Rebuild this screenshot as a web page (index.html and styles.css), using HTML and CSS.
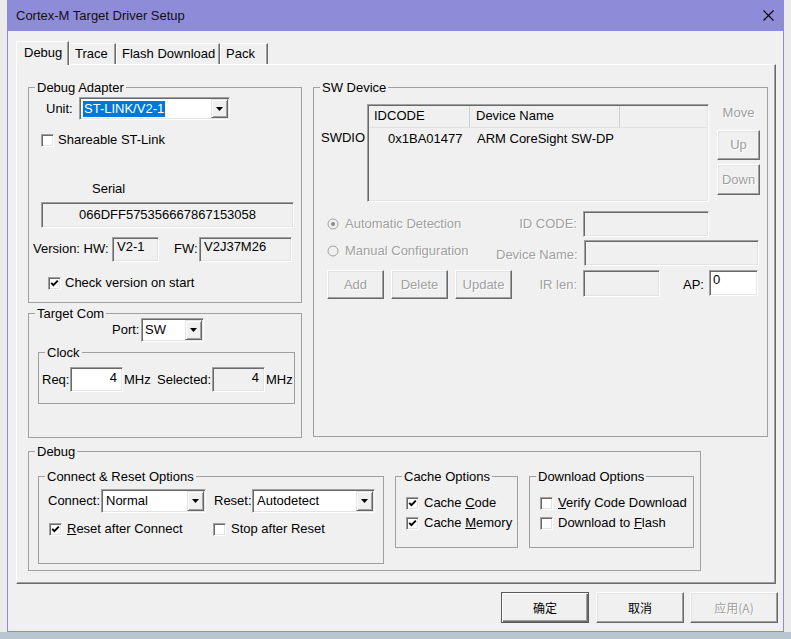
FILE: index.html
```html
<!DOCTYPE html>
<html>
<head>
<meta charset="utf-8">
<title>Cortex-M Target Driver Setup</title>
<link rel="stylesheet" href="styles.css">
</head>
<body>
<div class="window">
  <div class="titlebar">
    <span class="title">Cortex-M Target Driver Setup</span>
    <svg class="close" width="11" height="11" viewBox="0 0 11 11"><path d="M0.5 0.5L10.5 10.5M10.5 0.5L0.5 10.5" stroke="#000" stroke-width="1.1" fill="none"/></svg>
  </div>
  <div class="tabs">
    <div class="tab tab-active tab-debug">Debug</div>
    <div class="tab tab-trace">Trace</div>
    <div class="tab tab-flash">Flash Download</div>
    <div class="tab tab-pack">Pack</div>
  </div>
  <div class="pane">
    <div class="top-row">
      <div class="left-col">
        <fieldset class="grp adapter">
          <legend>Debug Adapter</legend>
          <div class="unit-row">
            <span class="unit-label">Unit:</span>
            <div class="combo combo-unit">
              <span class="combo-text"><span class="sel">ST-LINK/V2-1</span></span>
              <span class="combo-btn"><svg width="7" height="4" viewBox="0 0 7 4"><path d="M0 0H7L3.5 4Z" fill="#000"/></svg></span>
            </div>
          </div>
          <div class="check-row share-row"><span class="chk"></span><span>Shareable ST-Link</span></div>
          <div class="serial-label">Serial</div>
          <div class="field serial-field">066DFF575356667867153058</div>
          <div class="version-row">
            <span class="ver-label">Version: HW:</span>
            <div class="field hw-field">V2-1</div>
            <span class="fw-label">FW:</span>
            <div class="field fw-field">V2J37M26</div>
          </div>
          <div class="check-row checkver-row"><span class="chk"><svg width="9" height="9" viewBox="0 0 9 9"><path d="M1.2 3.8L3.4 6.2L7.8 1.6" stroke="#000" stroke-width="1.9" fill="none"/></svg></span><span>Check version on start</span></div>
        </fieldset>
        <fieldset class="grp target">
          <legend>Target Com</legend>
          <div class="port-row">
            <span class="port-label">Port:</span>
            <div class="combo combo-port">
              <span class="combo-text">SW</span>
              <span class="combo-btn"><svg width="7" height="4" viewBox="0 0 7 4"><path d="M0 0H7L3.5 4Z" fill="#000"/></svg></span>
            </div>
          </div>
          <fieldset class="grp clock">
            <legend>Clock</legend>
            <div class="clock-row">
              <span class="req-label">Req:</span>
              <div class="field field-white mhz-field">4</div>
              <span class="mhz">MHz</span>
              <span class="sel-label">Selected:</span>
              <div class="field mhz-field">4</div>
              <span class="mhz">MHz</span>
            </div>
          </fieldset>
        </fieldset>
      </div>
      <fieldset class="grp swdev">
        <legend>SW Device</legend>
        <div class="sw-top">
          <div class="swdio">SWDIO</div>
          <div class="listview">
            <div class="lv-head">
              <div class="lv-col lv-c1">IDCODE</div>
              <div class="lv-col lv-c2">Device Name</div>
              <div class="lv-col lv-c3"></div>
            </div>
            <div class="lv-row">
              <div class="lv-c1 lv-cell-id">0x1BA01477</div>
              <div class="lv-c2 lv-cell-name">ARM CoreSight SW-DP</div>
            </div>
          </div>
          <div class="move-col">
            <div class="move-label">Move</div>
            <div class="btn btn-disabled btn-up">Up</div>
            <div class="btn btn-disabled btn-down">Down</div>
          </div>
        </div>
        <div class="cfg-row cfg-a">
          <div class="cfg-left"><span class="radio"><svg width="12" height="12" viewBox="0 0 12 12"><circle cx="6" cy="6" r="5" fill="#f0f0f0" stroke="#a0a0a0"/><circle cx="6" cy="6" r="2" fill="#8a8a8a"/></svg></span><span class="dis">Automatic Detection</span></div>
          <span class="cfg-label dis">ID CODE:</span>
          <div class="field idcode-field"></div>
        </div>
        <div class="cfg-row cfg-b">
          <div class="cfg-left radio-manual"><span class="radio"><svg width="12" height="12" viewBox="0 0 12 12"><circle cx="6" cy="6" r="5" fill="#f0f0f0" stroke="#a0a0a0"/></svg></span><span class="dis">Manual Configuration</span></div>
          <span class="cfg-label dis devname-label">Device Name:</span>
          <div class="field devname-field"></div>
        </div>
        <div class="cfg-row cfg-c">
          <div class="cfg-left cfg-btns">
            <div class="btn btn-disabled btn-sm">Add</div>
            <div class="btn btn-disabled btn-sm">Delete</div>
            <div class="btn btn-disabled btn-sm">Update</div>
          </div>
          <span class="cfg-label dis">IR len:</span>
          <div class="field irlen-field"></div>
          <span class="ap-label">AP:</span>
          <div class="field field-white ap-field">0</div>
        </div>
      </fieldset>
    </div>
    <fieldset class="grp debug">
      <legend>Debug</legend>
      <div class="debug-row">
        <fieldset class="grp connect">
          <legend>Connect &amp; Reset Options</legend>
          <div class="connect-row">
            <span class="connect-label">Connect:</span>
            <div class="combo combo-connect">
              <span class="combo-text">Normal</span>
              <span class="combo-btn"><svg width="7" height="4" viewBox="0 0 7 4"><path d="M0 0H7L3.5 4Z" fill="#000"/></svg></span>
            </div>
            <span class="reset-label">Reset:</span>
            <div class="combo combo-reset">
              <span class="combo-text">Autodetect</span>
              <span class="combo-btn"><svg width="7" height="4" viewBox="0 0 7 4"><path d="M0 0H7L3.5 4Z" fill="#000"/></svg></span>
            </div>
          </div>
          <div class="check-row connect-checks">
            <div class="check-item first-check"><span class="chk"><svg width="9" height="9" viewBox="0 0 9 9"><path d="M1.2 3.8L3.4 6.2L7.8 1.6" stroke="#000" stroke-width="1.9" fill="none"/></svg></span><span><u>R</u>eset after Connect</span></div>
            <div class="check-item"><span class="chk"></span><span>Stop after Reset</span></div>
          </div>
        </fieldset>
        <fieldset class="grp cache">
          <legend>Cache Options</legend>
          <div class="check-row opt-row opt-first"><span class="chk"><svg width="9" height="9" viewBox="0 0 9 9"><path d="M1.2 3.8L3.4 6.2L7.8 1.6" stroke="#000" stroke-width="1.9" fill="none"/></svg></span><span>Cache <u>C</u>ode</span></div>
          <div class="check-row opt-row opt-second"><span class="chk"><svg width="9" height="9" viewBox="0 0 9 9"><path d="M1.2 3.8L3.4 6.2L7.8 1.6" stroke="#000" stroke-width="1.9" fill="none"/></svg></span><span>Cache <u>M</u>emory</span></div>
        </fieldset>
        <fieldset class="grp download">
          <legend>Download Options</legend>
          <div class="check-row opt-row opt-first clip"><span class="chk"></span><span><u>V</u>erify Code Download</span></div>
          <div class="check-row opt-row opt-second clip"><span class="chk"></span><span>Download to <u>F</u>lash</span></div>
        </fieldset>
      </div>
    </fieldset>
  </div>
  <div class="buttons">
    <div class="btn btn-default btn-dlg">确定</div>
    <div class="btn btn-dlg">取消</div>
    <div class="btn btn-dlg btn-disabled">应用(A)</div>
  </div>
</div>
</body>
</html>
```
FILE: styles.css
```css
* { box-sizing: border-box; }
html, body { margin: 0; padding: 0; }
body {
  width: 791px;
  height: 639px;
  overflow: hidden;
  background: linear-gradient(to bottom, #ebebeb 0, #ebebeb 632px, #b9c5d1 632px);
  font-family: "Liberation Sans", Arial, "Noto Sans CJK SC", sans-serif;
  font-size: 13px;
  line-height: 16px;
  color: #000;
}
.window {
  margin-left: 7px;
  width: 777px;
  height: 632px;
  background: #f0f0f0;
  border: 1px solid #8e8bd9;
  border-top: 0;
}
.titlebar {
  height: 31px;
  background: #8e8bd9;
  display: flex;
  align-items: center;
  justify-content: space-between;
  padding: 0 9px 0 8px;
}
.title { color: #111; }
.close { display: block; }

/* tabs */
.tabs {
  display: flex;
  align-items: flex-end;
  height: 23px;
  margin: 10px 0 0 8px;
  position: relative;
  z-index: 1;
}
.tab {
  height: 21px;
  padding-left: 5px;
  line-height: 19px;
  border-top: 1px solid #fff;
  border-left: 1px solid #fff;
  border-right: 1px solid #696969;
  box-shadow: inset -1px 0 #a0a0a0;
  background: #f0f0f0;
  white-space: nowrap;
}
.tab-active {
  height: 24px;
  margin-bottom: -1px;
  padding-left: 7px;
  line-height: 21px;
}
.tab-debug { width: 53px; }
.tab-trace { width: 47px; }
.tab-flash { width: 104px; }
.tab-pack { width: 48px; }

.pane {
  margin-left: 8px;
  width: 760px;
  height: 520px;
  border-top: 1px solid #fff;
  border-left: 1px solid #fff;
  border-right: 1px solid #696969;
  border-bottom: 1px solid #696969;
  box-shadow: inset -1px -1px #a0a0a0;
  padding: 15px 0 0 11px;
}

/* group boxes */
.grp {
  margin: 0;
  padding: 0;
  min-width: 0;
  border: 1px solid #a0a0a0;
}
.grp > legend {
  margin-left: 6px;
  padding: 0 2px;
  line-height: 15px;
}

.top-row { display: flex; gap: 11px; }
.left-col { width: 274px; display: flex; flex-direction: column; }
.adapter { height: 223px; }
.target { height: 132px; margin-top: 3px; }
.swdev { width: 455px; height: 357px; }

/* controls */
.combo {
  display: flex;
  background: #fff;
  border: 1px solid;
  border-color: #a0a0a0 #fff #fff #a0a0a0;
  box-shadow: inset 1px 1px #696969, inset -1px -1px #e3e3e3;
  padding: 1px;
}
.combo-text {
  flex: 1;
  padding-left: 2px;
  display: flex;
  align-items: center;
  white-space: nowrap;
  overflow: hidden;
}
.combo-btn {
  width: 17px;
  background: #f0f0f0;
  border: 1px solid;
  border-color: #e3e3e3 #696969 #696969 #e3e3e3;
  box-shadow: inset 1px 1px #fff, inset -1px -1px #a0a0a0;
  display: flex;
  align-items: center;
  justify-content: center;
}
.combo-btn svg { display: block; }
.sel { background: #0078d7; color: #fff; padding: 0 1px; line-height: 16px; }

.field {
  border: 1px solid;
  border-color: #a0a0a0 #fff #fff #a0a0a0;
  box-shadow: inset 1px 1px #696969, inset -1px -1px #e3e3e3;
  background: #f0f0f0;
  white-space: nowrap;
  overflow: hidden;
}
.field-white { background: #fff; }

.chk {
  width: 13px;
  height: 13px;
  flex: 0 0 13px;
  background: #fff;
  border: 1px solid;
  border-color: #a0a0a0 #fff #fff #a0a0a0;
  box-shadow: inset 1px 1px #696969, inset -1px -1px #e3e3e3;
  display: flex;
  align-items: center;
  justify-content: center;
}
.chk svg { display: block; }
.check-row { display: flex; align-items: center; height: 16px; gap: 5px; white-space: nowrap; }
.check-item { display: flex; align-items: center; gap: 5px; }

.btn {
  background: #f0f0f0;
  border: 1px solid;
  border-color: #fff #696969 #696969 #fff;
  box-shadow: inset -1px -1px #a0a0a0, inset 1px 1px #e3e3e3;
  display: flex;
  align-items: center;
  justify-content: center;
  white-space: nowrap;
}
.btn-disabled { color: #a0a0a0; text-shadow: 1px 1px 0 #fff; }
.dis { color: #a0a0a0; text-shadow: 1px 1px 0 #fff; }

/* debug adapter */
.unit-row { display: flex; align-items: center; margin-top: 2px; padding-left: 17px; height: 23px; }
.unit-label { width: 33px; }
.combo-unit { width: 151px; height: 23px; }
.share-row { margin-top: 12px; padding-left: 12px; gap: 4px; }
.serial-label { margin-top: 33px; padding-left: 63px; height: 16px; }
.serial-field {
  margin: 5px 0 0 12px;
  width: 253px;
  height: 26px;
  line-height: 24px;
  text-align: center;
}
.version-row { display: flex; margin-top: 9px; height: 25px; padding-left: 4px; }
.ver-label { width: 79px; padding-top: 4px; }
.hw-field, .fw-field { height: 25px; padding: 1px 0 0 4px; }
.hw-field { width: 47px; }
.fw-label { margin-left: 15px; width: 25px; padding-top: 4px; }
.fw-field { width: 93px; }
.checkver-row { margin-top: 13px; padding-left: 19px; gap: 4px; }

/* target com */
.port-row { display: flex; align-items: center; margin-top: -3px; padding-left: 83px; height: 24px; }
.port-label { width: 29px; }
.combo-port { width: 63px; height: 24px; }
.clock { margin: 3px 0 0 9px; width: 257px; height: 59px; }
.clock-row { display: flex; align-items: center; margin-top: 7px; height: 25px; padding-left: 3px; }
.req-label { width: 28px; }
.mhz-field { width: 53px; height: 25px; text-align: right; padding: 2px 5px 0 0; }
.mhz { width: 27px; padding-left: 1px; }
.sel-label { margin-left: 7px; width: 55px; }

/* sw device */
.sw-top { display: flex; margin-top: 9px; height: 98px; padding-left: 7px; }
.swdio { width: 46px; padding-top: 26px; }
.listview {
  width: 342px;
  height: 98px;
  border: 1px solid;
  border-color: #a0a0a0 #fff #fff #a0a0a0;
  box-shadow: inset 1px 1px #696969, inset -1px -1px #e3e3e3;
  background: #f0f0f0;
  padding: 1px;
}
.lv-head { display: flex; height: 22px; border-bottom: 1px solid #e0e0e0; }
.lv-col { line-height: 20px; border-right: 1px solid #d0d0d0; padding-left: 5px; }
.lv-c1 { width: 101px; }
.lv-c2 { width: 150px; }
.lv-col.lv-c2 { padding-left: 6px; }
.lv-c3 { flex: 1; border-right: 0; }
.lv-row { display: flex; margin-top: 3px; }
.lv-cell-id { padding-left: 19px; }
.lv-cell-name { padding-left: 7px; white-space: nowrap; }
.move-col { margin-left: 8px; width: 43px; display: flex; flex-direction: column; }
.move-label { color: #a0a0a0; text-align: center; margin-top: 1px; height: 16px; text-shadow: 1px 1px 0 #fff; }
.btn-up { margin-top: 9px; height: 30px; }
.btn-down { margin-top: 4px; height: 31px; }

.cfg-row { display: flex; align-items: center; }
.cfg-a { margin-top: 9px; height: 26px; }
.cfg-b { margin-top: 3px; height: 26px; }
.cfg-c { margin-top: 4px; height: 29px; }
.cfg-left {
  flex: 0 0 182px;
  min-width: 0;
  padding-left: 13px;
  display: flex;
  align-items: center;
  white-space: nowrap;
}
.radio { width: 12px; height: 12px; margin-right: 6px; }
.radio svg { display: block; }
.radio-manual { margin-bottom: 5px; }
.devname-label { padding-top: 3px; }
.cfg-label { flex: 0 0 81px; text-align: right; white-space: nowrap; margin-right: 6px; }
.idcode-field { width: 126px; height: 26px; }
.devname-field { width: 175px; height: 26px; }
.cfg-btns { gap: 7px; align-self: stretch; }
.btn-sm { width: 57px; height: 29px; flex: 0 0 57px; }
.irlen-field { width: 77px; height: 27px; align-self: flex-start; }
.ap-label { margin-left: 23px; width: 26px; }
.ap-field { width: 49px; height: 26px; align-self: flex-start; padding: 1px 0 0 3px; }

/* debug */
.debug { margin-top: 6px; width: 673px; height: 127px; }
.debug-row { display: flex; gap: 11px; margin-top: 10px; padding-left: 9px; }
.connect { width: 346px; height: 95px; }
.cache { width: 123px; height: 79px; }
.download { width: 165px; height: 79px; }
.connect-row { display: flex; align-items: center; margin-top: 5px; height: 24px; padding-left: 9px; }
.connect-label { width: 53px; }
.combo-connect { width: 105px; height: 24px; }
.reset-label { margin-left: 8px; width: 38px; }
.combo-reset { width: 123px; height: 24px; }
.combo-connect .combo-text, .combo-reset .combo-text { padding-left: 3px; }
.connect-checks { margin-top: 8px; padding-left: 10px; gap: 0; }
.first-check { width: 164px; }
.opt-row { padding-left: 10px; }
.opt-first { margin-top: 11px; }
.opt-second { margin-top: 4px; }
.clip { overflow: hidden; margin-right: 5px; }

/* dialog buttons */
.buttons { display: flex; justify-content: flex-end; gap: 6px; margin-top: 8px; padding-right: 5px; }
.btn-dlg {
  width: 88px;
  height: 31px;
  font-family: "Noto Sans CJK SC", "Liberation Sans", sans-serif;
  font-size: 12px;
}
.btn-default {
  margin-right: 1px;
  border: 1px solid #5a5a5a;
  box-shadow: inset 1px 1px #fff, inset -1px -1px #696969, inset -2px -2px #a0a0a0;
}
```
